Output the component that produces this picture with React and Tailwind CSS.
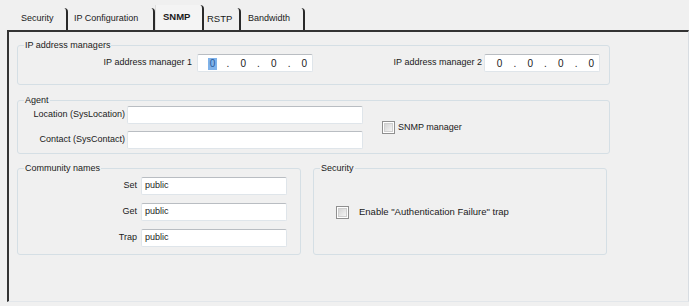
import React from "react";

const Field = ({ className = "", children }) => (
    <div
        className={`bg-white border border-[#dfe5ea] border-t-[#b9bdc2] rounded-[2px] flex items-center ${className}`}
    >
        {children}
    </div>
);

const IpBox = ({ selected }) => (
    <Field className="w-[116px] h-[18px] pl-[7px] text-[10px]">
        {["0", ".", "0", ".", "0", ".", "0"].map((c, i) => (
            <span key={i} className="w-[17.2px] text-center">
                {i === 0 && selected ? (
                    <span className="inline-block w-[9px] h-[12px] leading-[12px] bg-[#7fb2ea] text-[#2a5c9c]">
                        0
                    </span>
                ) : (
                    c
                )}
            </span>
        ))}
    </Field>
);

const Checkbox = () => (
    <div className="w-[13px] h-[13px] border border-[#8f8f8f] p-[1px] bg-white shrink-0">
        <div className="w-full h-full bg-gradient-to-br from-[#d5d5d5] to-[#f4f4f4] border border-[#cfcfcf]" />
    </div>
);

const Group = ({ title, className = "", children }) => (
    <fieldset className={`border border-[#d5dfe5] rounded-[3px] ${className}`}>
        <legend className="ml-[6px] px-[1px] leading-[12px]">{title}</legend>
        {children}
    </fieldset>
);

const Tab = ({ label, active, className = "" }) => (
    <div
        className={`flex items-center border-r-2 border-[#2a2a2a] rounded-tr-[4px] ${
            active ? "h-[25px] font-bold bg-[#f4f4f4] border-l border-l-[#dedede]" : "h-[22px]"
        } ${className}`}
    >
        {label}
    </div>
);

export default function App() {
    return (
        <div
            className="w-[689px] h-[306px] bg-[#f0f0f0] text-[9px] text-[#1a1a1a] overflow-hidden whitespace-nowrap"
            style={{ fontFamily: '"Liberation Sans", Arial, sans-serif' }}
        >
            {/* tab strip */}
            <div className="h-[30px] pl-[8px] flex items-end">
                <Tab label="Security" className="w-[60px] pl-[13px]" />
                <Tab label="IP Configuration" className="w-[87px] pl-[6px]" />
                <Tab label="SNMP" active className="w-[49px] pl-[7px] text-[9.5px]" />
                <Tab label="RSTP" className="w-[37px] pl-[3px] text-[9.5px]" />
                <Tab label="Bandwidth" className="w-[64px] pl-[7px]" />
            </div>

            {/* panel */}
            <div className="ml-[7px] h-[272px] border-t-2 border-l-2 border-t-[#333] border-l-[#333] border-r border-r-[#d8dde2] border-b border-b-[#e2e6ea] pl-[8px] pr-[78px] pt-[7px] flex flex-col">
                <Group title="IP address managers" className="h-[46px] pt-[3px]">
                    <div className="flex items-center">
                        <span className="w-[174px] text-right">IP address manager 1</span>
                        <div className="ml-[5px]">
                            <IpBox selected />
                        </div>
                        <span className="w-[169px] text-right">IP address manager 2</span>
                        <div className="ml-[2px]">
                            <IpBox />
                        </div>
                    </div>
                </Group>

                <Group title="Agent" className="mt-[9px] h-[60px]">
                    <div className="flex items-center">
                        <div className="flex flex-col gap-[7px]">
                            <div className="flex items-center">
                                <span className="w-[107px] text-right">Location (SysLocation)</span>
                                <Field className="ml-[2px] w-[236px] h-[18px]" />
                            </div>
                            <div className="flex items-center">
                                <span className="w-[107px] text-right">Contact (SysContact)</span>
                                <Field className="ml-[2px] w-[236px] h-[18px]" />
                            </div>
                        </div>
                        <div className="ml-[19px] flex items-center gap-[3px]">
                            <Checkbox />
                            <span>SNMP manager</span>
                        </div>
                    </div>
                </Group>

                <div className="mt-[8px] flex gap-[12px]">
                    <Group title="Community names" className="w-[284px] h-[93px] pt-[3px]">
                        <div className="flex flex-col gap-[8px]">
                            {["Set", "Get", "Trap"].map((l) => (
                                <div key={l} className="flex items-center">
                                    <span className="w-[119px] text-right">{l}</span>
                                    <Field className="ml-[4px] w-[146px] h-[18px] pl-[3px]">
                                        public
                                    </Field>
                                </div>
                            ))}
                        </div>
                    </Group>

                    <Group title="Security" className="w-[294px] h-[93px]">
                        <div className="pl-[22px] pt-[31px] flex items-center gap-[10px] text-[9.5px]">
                            <Checkbox />
                            <span>Enable "Authentication Failure" trap</span>
                        </div>
                    </Group>
                </div>
            </div>
        </div>
    );
}
